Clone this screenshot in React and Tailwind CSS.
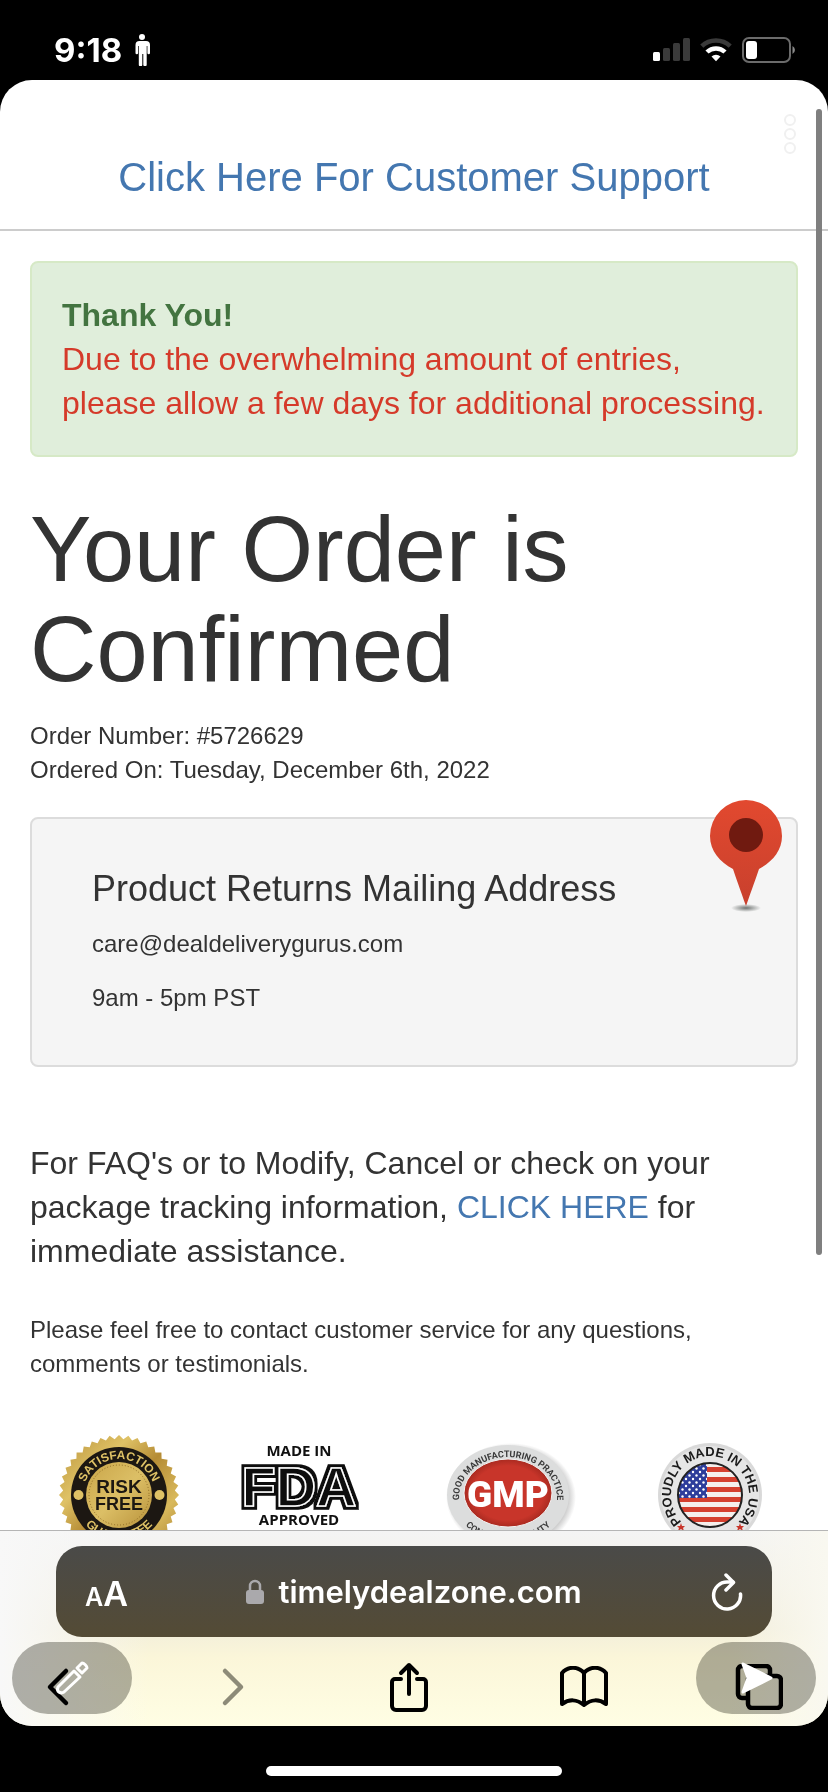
const StatusBar = () => (
  <div className="flex h-20 shrink-0 items-center justify-between pt-5 pr-8 pl-[54px] text-white">
    <div className="flex items-center gap-3">
      <span className="font-['Inter',sans-serif] text-[33px] leading-none font-bold">9:18</span>
      <svg className="h-8 w-4" viewBox="0 0 16 32" fill="currentColor">
        <circle cx="8" cy="3" r="3" />
        <path d="M4 7h8a4 4 0 0 1 4 4v8a1.3 1.3 0 0 1-2.6 0v-7h-.7v18.5a1.6 1.6 0 0 1-3.4.2V20h-1v10.700a1.700 1.700 0 0 1-3.500-.2V12h-.7v7a1.300 1.300 0 0 1-2.600 0v-8a4 4 0 0 1 4-4z" />
      </svg>
    </div>
    <div className="flex items-center gap-[10px]">
      <svg className="h-6 w-[37px]" viewBox="0 0 37 24" fill="#3a3a3a">
        <rect x="0" y="14" width="7" height="9" rx="1.5" fill="#fff" />
        <rect x="10" y="10" width="7" height="13" rx="1.5" />
        <rect x="20" y="5" width="7" height="18" rx="1.5" />
        <rect x="30" y="0" width="7" height="23" rx="1.5" />
      </svg>
      <svg className="h-6 w-8" viewBox="0 0 32 24" fill="none" strokeWidth="4.5">
        <path d="M1.8 8.2a20.5 20.5 0 0 1 28.400 0" stroke="#3a3a3a" />
        <path d="M7 14a13 13 0 0 1 18 0" stroke="#fff" />
        <path d="M11.500 18.600a6.500 6.500 0 0 1 9 0L16 23.300z" fill="#fff" />
      </svg>
      <svg className="h-[26px] w-[54px]" viewBox="0 0 54 26">
        <rect x="1" y="1" width="47" height="24" rx="6" fill="none" stroke="#6b6b6b" strokeWidth="2" />
        <rect x="4" y="4" width="11" height="18" rx="3" fill="#fff" />
        <path d="M50.500 9v8a4.500 4.500 0 0 0 0-8z" fill="#8a8a8a" />
      </svg>
    </div>
  </div>
);

const MapPin = () => (
  <svg className="absolute -top-5 right-3 h-[116px] w-[76px]" viewBox="0 0 76 116">
    <defs>
      <linearGradient id="pin" x1="0" y1="0" x2="0" y2="1">
        <stop offset="0" stopColor="#e2492f" />
        <stop offset="1" stopColor="#c8402d" />
      </linearGradient>
      <radialGradient id="pinShadow">
        <stop offset="0" stopColor="#6f7472" />
        <stop offset="1" stopColor="#6f7472" stopOpacity="0" />
      </radialGradient>
    </defs>
    <ellipse cx="38" cy="109" rx="15" ry="4" fill="url(#pinShadow)" />
    <path d="M38 1a36 36 0 0 1 36 36c0 15-10 26-23 33-3 9-7 20-13 37-6-17-10-28-13-37C12 63 2 52 2 37A36 36 0 0 1 38 1z" fill="url(#pin)" />
    <circle cx="38" cy="36" r="17" fill="#701a10" />
  </svg>
);

// teeth round the rim of the gold seal
const sealTeeth = Array.from({ length: 80 }, (_, i) => {
  const r = i % 2 ? 56 : 60;
  const a = (i * Math.PI) / 40;
  return `${60 + r * Math.cos(a)},${60 + r * Math.sin(a)}`;
}).join(' ');

const RiskFreeBadge = () => (
  <svg className="h-[120px] w-[120px]" viewBox="0 0 120 120" fontFamily="Liberation Sans, sans-serif">
    <defs>
      <linearGradient id="gold" x1="0" y1="0" x2="1" y2="1">
        <stop offset="0" stopColor="#b8913a" />
        <stop offset="0.3" stopColor="#dfc266" />
        <stop offset="0.5" stopColor="#b58c35" />
        <stop offset="0.75" stopColor="#d9b95c" />
        <stop offset="1" stopColor="#a57c2c" />
      </linearGradient>
      <linearGradient id="goldInner" x1="0" y1="0" x2="1" y2="1">
        <stop offset="0" stopColor="#c9a548" />
        <stop offset="0.5" stopColor="#dcbf66" />
        <stop offset="1" stopColor="#b8913a" />
      </linearGradient>
      <path id="sealTop" d="M24 60a36 36 0 0 1 72 0" />
      <path id="sealBottom" d="M15 60a45 45 0 0 0 90 0" />
    </defs>
    <polygon points={sealTeeth} fill="url(#gold)" />
    <circle cx="60" cy="60" r="48" fill="#1c1712" />
    <circle cx="60" cy="60" r="33" fill="url(#goldInner)" />
    <circle cx="60" cy="60" r="30" fill="none" stroke="#8f6b25" strokeDasharray="1 2" />
    <circle cx="19.500" cy="60" r="5" fill="#dfc266" />
    <circle cx="100.500" cy="60" r="5" fill="#dfc266" />
    <g fontSize="12" fontWeight="700" textAnchor="middle" fill="#dfc266">
      <text><textPath href="#sealTop" startOffset="50%">SATISFACTION</textPath></text>
      <text><textPath href="#sealBottom" startOffset="50%">GUARANTEE</textPath></text>
    </g>
    <g fontSize="19" fontWeight="700" textAnchor="middle" fill="#1c1712">
      <text x="60" y="58">RISK</text>
      <text x="60" y="75" fontSize="18">FREE</text>
    </g>
  </svg>
);

const FdaBadge = () => (
  <svg className="h-[120px] w-[150px]" viewBox="0 0 150 120" textAnchor="middle" fontWeight="700" fill="#111">
    <defs>
      <filter id="outline" x="-10%" y="-10%" width="120%" height="120%">
        <feMorphology in="SourceAlpha" operator="dilate" radius="3" result="thick" />
        <feFlood floodColor="#111" />
        <feComposite in2="thick" operator="in" result="edge" />
        <feMerge>
          <feMergeNode in="edge" />
          <feMergeNode in="SourceGraphic" />
        </feMerge>
      </filter>
    </defs>
    <g fontFamily="Open Sans, sans-serif" fontSize="15">
      <text x="62" y="21">MADE IN</text>
      <text x="62" y="90">APPROVED</text>
      <text x="62" y="105">FACILITIES</text>
    </g>
    <text x="62" y="71" fontFamily="Liberation Sans, sans-serif" fontSize="56" stroke="#fff" strokeWidth="1.5" filter="url(#outline)">FDA</text>
  </svg>
);

const GmpBadge = () => (
  <svg className="h-[120px] w-[154px]" viewBox="0 0 154 120">
    <defs>
      <radialGradient id="gmpShadow">
        <stop offset="0.85" stopColor="#999" stopOpacity="0.6" />
        <stop offset="1" stopColor="#999" stopOpacity="0" />
      </radialGradient>
      <radialGradient id="gmpRed">
        <stop offset="0.8" stopColor="#c8352a" />
        <stop offset="1" stopColor="#a92a20" />
      </radialGradient>
      <path id="gmpTop" d="M15 63a49 41 0 0 1 98 0" />
      <path id="gmpBottom" d="M8 60a56 47 0 0 0 112 0" />
    </defs>
    <ellipse cx="67" cy="62" rx="65" ry="54" fill="url(#gmpShadow)" />
    <ellipse cx="64" cy="60" rx="61" ry="50" fill="#dcdddd" />
    <ellipse cx="64" cy="58" rx="44" ry="34" fill="url(#gmpRed)" stroke="#f3f3f3" />
    <g fontFamily="Roboto, sans-serif" fontSize="9" fontWeight="700" textAnchor="middle" fill="#3b3b3b">
      <text><textPath href="#gmpTop" startOffset="50%">GOOD MANUFACTURING PRACTICE</textPath></text>
      <text><textPath href="#gmpBottom" startOffset="50%">CONSISTENT QUALITY</textPath></text>
    </g>
    <text x="64" y="72" fontFamily="Roboto, sans-serif" fontSize="37" fontWeight="900" textAnchor="middle" fill="#fff">GMP</text>
  </svg>
);

const UsaBadge = () => (
  <svg className="h-[120px] w-[108px]" viewBox="0 0 108 120">
    <defs>
      <clipPath id="flag"><circle cx="54" cy="60" r="32" /></clipPath>
      <path id="usaRing" d="M30 91a39 39 0 1 1 48 0" />
      <pattern id="stars" width="7" height="7" patternUnits="userSpaceOnUse">
        <circle cx="2" cy="2" r="1.2" fill="#fff" />
        <circle cx="5.5" cy="5.5" r="1.2" fill="#fff" />
      </pattern>
    </defs>
    <circle cx="54" cy="60" r="52" fill="#d9d9d9" />
    <circle cx="54" cy="60" r="49" fill="#e6e6e6" />
    <g clipPath="url(#flag)">
      <rect x="20" y="26" width="70" height="70" fill="#f5efec" />
      {[32, 42, 52, 62, 72, 82].map((y) => (
        <rect key={y} x="20" y={y} width="70" height="5" fill="#d5402f" />
      ))}
      <rect x="20" y="26" width="31" height="37" fill="#2d3d9b" />
      <rect x="20" y="26" width="31" height="37" fill="url(#stars)" />
    </g>
    <circle cx="54" cy="60" r="32" fill="none" stroke="#222" strokeWidth="2" />
    <text fontFamily="Liberation Sans, sans-serif" fontSize="13" fontWeight="700" textAnchor="middle" fill="#1b1b1b">
      <textPath href="#usaRing" startOffset="50%">PROUDLY MADE IN THE USA</textPath>
    </text>
    <g fill="#c8352a">
      <path d="M25 88l1 3h3l-2 2 1 3-3-2-3 2 1-3-2-2h3z" />
      <path d="M84 88l1 3h3l-2 2 1 3-3-2-3 2 1-3-2-2h3z" />
    </g>
  </svg>
);

const OrderPage = () => (
  <main className="relative min-h-0 flex-1 overflow-hidden rounded-t-[32px] bg-white font-['Liberation_Sans',sans-serif] text-[#333]">
    <header className="flex h-[151px] items-end justify-center border-b-2 border-[#ccc] pb-6">
      <a href="#support" className="text-[40px] leading-[56px] text-[#4477b0]">Click Here For Customer Support</a>
    </header>

    <div className="px-[30px] pt-[30px]">
      <section className="rounded-lg border-2 border-[#d6e9c6] bg-[#e0eedb] px-[30px] py-[30px] text-[32px] leading-[44px] text-[#d53a2a]">
        <strong className="block text-[#437440]">Thank You!</strong>
        <p>Due to the overwhelming amount of entries, please allow a few days for additional processing.</p>
      </section>

      <h1 className="mt-[42px] text-[92px] leading-[100px]">Your Order is Confirmed</h1>

      <div className="mt-5 text-2xl leading-[34px]">
        <p>Order Number: #5726629</p>
        <p>Ordered On: Tuesday, December 6th, 2022</p>
      </div>

      <section className="relative mt-[30px] rounded-lg border-2 border-[#dcdcdc] bg-[#f5f5f5] px-[60px] pt-12 pb-[50px] text-2xl leading-[34px]">
        <MapPin />
        <h2 className="text-4xl leading-[44px]">Product Returns Mailing Address</h2>
        <p className="mt-4">care@dealdeliverygurus.com</p>
        <p className="mt-5">9am - 5pm PST</p>
      </section>

      <p className="mt-[74px] text-[32px] leading-[44px]">
        For FAQ's or to Modify, Cancel or check on your package tracking information,{' '}
        <a href="#tracking" className="text-[#4477b0]">CLICK HERE</a> for immediate assistance.
      </p>

      <p className="mt-10 text-2xl leading-[34px]">
        Please feel free to contact customer service for any questions, comments or testimonials.
      </p>

      <div className="mt-[54px] flex justify-between pr-[34px] pl-[29px]">
        <RiskFreeBadge />
        <FdaBadge />
        <GmpBadge />
        <UsaBadge />
      </div>
    </div>

    <button type="button" aria-label="More options" className="absolute top-[34px] right-8 flex flex-col gap-[2px]">
      <span className="size-3 rounded-full border-2 border-[#f0f0f0]" />
      <span className="size-3 rounded-full border-2 border-[#f0f0f0]" />
      <span className="size-3 rounded-full border-2 border-[#f0f0f0]" />
    </button>
    <div className="absolute top-[29px] right-1.5 h-[79%] w-1.5 rounded-full bg-[#7f7f7f]" />
  </main>
);

const BrowserBar = () => (
  <footer className="relative shrink-0 rounded-b-[32px] border-t border-[#b5b5b5] bg-[linear-gradient(to_right,#f8f8f8,transparent_18%,transparent_88%,#f9f8f0),linear-gradient(to_bottom,#f4f4f4,#f2eeda_50%,#fbf6d9_65%,#fffee4)] pt-[15px] text-black">
    <div className="mx-14 flex h-[91px] items-center justify-between rounded-[26px] bg-linear-to-b from-[#4a4a48] to-[#544b35] px-[29px] font-['Inter',sans-serif] font-semibold text-white">
      <button type="button" aria-label="Page settings" className="flex w-11 items-baseline pt-1 leading-none">
        <span className="text-[25px]">A</span>
        <span className="text-[34px]">A</span>
      </button>
      <div className="flex items-center gap-[14px]">
        <svg className="h-[26px] w-[18px] text-[#aaa9ac]" viewBox="0 0 18 26">
          <path d="M4 12V7a5 5 0 0 1 10 0v5" fill="none" stroke="currentColor" strokeWidth="2.5" />
          <rect x="0" y="11" width="18" height="14" rx="3" fill="currentColor" />
        </svg>
        <span className="text-[31px] leading-9">timelydealzone.com</span>
      </div>
      <button type="button" aria-label="Reload" className="flex w-11 justify-end">
        <svg className="h-[38px] w-8" viewBox="0 0 32 38" fill="none" stroke="currentColor" strokeWidth="3.5" strokeLinecap="round" strokeLinejoin="round">
          <path d="M22 9h-5.500A13.500 13.500 0 1 0 29.500 21" />
          <path d="M15 2l7.500 7.500L15 17" />
        </svg>
      </button>
    </div>

    <div className="flex h-[89px] items-center justify-between pt-[10px] pr-[45px] pl-[34px]">
      <button type="button" aria-label="Back" className="flex w-12 justify-center">
        <svg className="h-10 w-6" viewBox="0 0 24 40" fill="none" stroke="currentColor" strokeWidth="4.5" strokeLinecap="round" strokeLinejoin="round">
          <path d="M20 4L4 20l16 16" />
        </svg>
      </button>
      <button type="button" aria-label="Forward" className="flex w-12 justify-center text-[#8d8b78]">
        <svg className="h-10 w-6" viewBox="0 0 24 40" fill="none" stroke="currentColor" strokeWidth="4.5" strokeLinecap="round" strokeLinejoin="round">
          <path d="M4 4l16 16L4 36" />
        </svg>
      </button>
      <button type="button" aria-label="Share" className="flex w-12 justify-center">
        <svg className="h-[50px] w-10" viewBox="0 0 40 50" fill="none" stroke="currentColor" strokeWidth="4" strokeLinecap="round" strokeLinejoin="round">
          <path d="M12 17H6a3 3 0 0 0-3 3v24a4 4 0 0 0 4 4h26a4 4 0 0 0 4-4V20a3 3 0 0 0-3-3h-6" />
          <path d="M20 32V3M12 11l8-8 8 8" />
        </svg>
      </button>
      <button type="button" aria-label="Bookmarks" className="flex w-12 justify-center">
        <svg className="h-[42px] w-12" viewBox="0 0 48 42" fill="none" stroke="currentColor" strokeWidth="4" strokeLinecap="round" strokeLinejoin="round">
          <path d="M24 7C18 0 8 0 2 7v31c7-5 15-5 22 1 7-6 15-6 22-1V7C40 0 30 0 24 7zv32" />
        </svg>
      </button>
      <button type="button" aria-label="Tabs" className="flex w-12 justify-center">
        <svg className="h-[46px] w-12" viewBox="0 0 48 46" fill="none" stroke="currentColor" strokeWidth="4.5" strokeLinejoin="round">
          <path d="M13 34H7a4 4 0 0 1-4-4V6a4 4 0 0 1 4-4h24a4 4 0 0 1 4 4v6" />
          <rect x="13" y="12" width="33" height="32" rx="4" />
        </svg>
      </button>
    </div>

    {/* floating edit and send pills, the fill multiplies so the toolbar icons stay black */}
    <button type="button" aria-label="Edit" className="absolute bottom-3 left-3 h-[72px] w-[120px] rounded-full bg-[#b2b2ae] mix-blend-multiply" />
    <button type="button" aria-label="Send" className="absolute right-3 bottom-3 h-[72px] w-[120px] rounded-full bg-[#b2b2ae] mix-blend-multiply" />
    <div className="pointer-events-none absolute inset-x-3 bottom-3 flex h-[72px] items-center justify-between px-[42px] text-white">
      <svg className="h-9 w-9" viewBox="0 0 36 36" fill="none" stroke="currentColor" strokeWidth="3" strokeLinejoin="round">
        <path d="M4 27L20 11l6 6L10 32c-3 2-8 0-6-5z" />
        <path d="M23 8l5-5c2 0 5 3 5 5l-5 5z" />
      </svg>
      <svg className="h-9 w-9" viewBox="0 0 36 36" fill="currentColor" stroke="currentColor" strokeWidth="3" strokeLinejoin="round">
        <path d="M5 4l28 14L5 32l5-14z" />
      </svg>
    </div>
  </footer>
);

const App = () => (
  <div className="flex h-screen flex-col bg-black">
    <StatusBar />
    <OrderPage />
    <BrowserBar />
    <div className="flex h-[66px] shrink-0 items-end justify-center pb-4">
      <div className="h-[10px] w-[296px] rounded-full bg-white" />
    </div>
  </div>
);

export default App;
